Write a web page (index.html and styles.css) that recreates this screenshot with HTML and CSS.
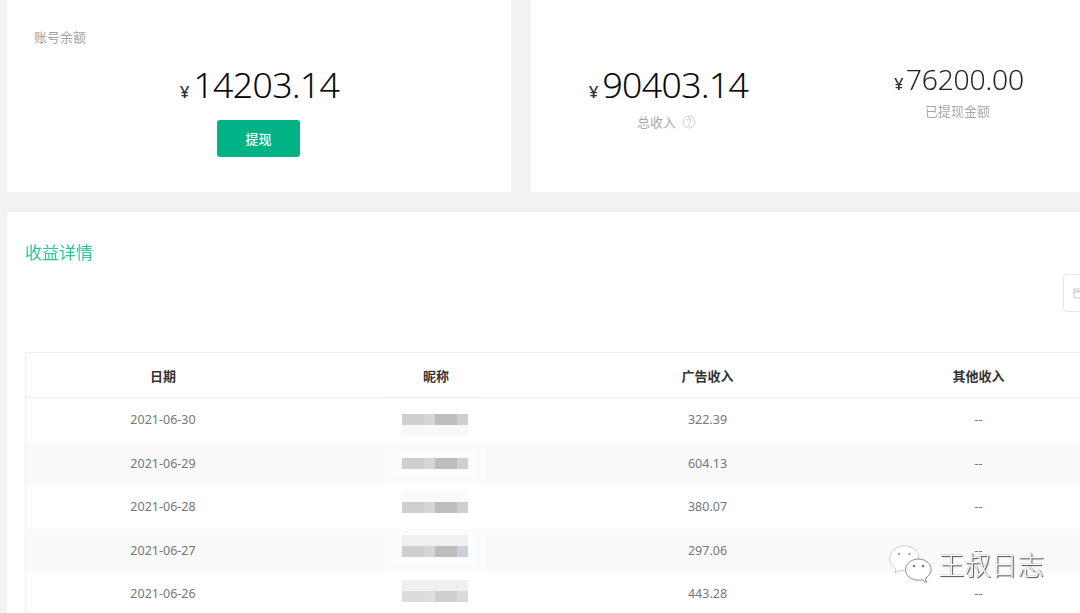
FILE: index.html
```html
<!DOCTYPE html>
<html lang="zh-CN">
<head>
<meta charset="utf-8">
<title>收益详情</title>
<link rel="stylesheet" href="styles.css">
</head>
<body>
<main class="page">
  <section class="top">
    <div class="card balance">
      <div class="balance-title">账号余额</div>
      <div class="amount big"><span class="yen">¥</span>14203.14</div>
      <button class="withdraw">提现</button>
    </div>
    <div class="card income">
      <div class="stat stat-total">
        <div class="amount big"><span class="yen">¥</span>90403.14</div>
        <div class="stat-label">总收入
          <svg class="help" viewBox="0 0 14 14" width="14" height="14"><circle cx="7" cy="7" r="6" fill="none" stroke="#d0d0d0"/><path d="M5.2 5.600a1.900 1.900 0 1 1 2.800 1.600c-.7.400-1 .7-1 1.500" fill="none" stroke="#c4c4c4"/><circle cx="7" cy="10.400" r=".7" fill="#c4c4c4"/></svg>
        </div>
      </div>
      <div class="stat stat-withdrawn">
        <div class="amount mid"><span class="yen">¥</span>76200.00</div>
        <div class="stat-label">已提现金额</div>
      </div>
    </div>
  </section>

  <section class="card details">
    <h2 class="details-title">收益详情</h2>
    <div class="filter-row">
      <div class="date-box">
        <svg class="date-icon" viewBox="0 0 12 12" width="12" height="12"><rect x="1" y="2" width="10" height="9" rx="1" fill="none" stroke="#c9c9d2" stroke-width="1.200"/><path d="M1 5h10M3 4h6" stroke="#c9c9d2" stroke-width="1.200"/></svg>
      </div>
    </div>
    <table class="table">
      <thead>
        <tr><th>日期</th><th>昵称</th><th>广告收入</th><th>其他收入</th></tr>
      </thead>
      <tbody>
        <tr><td>2021-06-30</td><td><div class="mosaic m-under r1"><i></i><i></i><i></i><i></i><i></i><i></i></div></td><td>322.39</td><td>--</td></tr>
        <tr><td>2021-06-29</td><td><div class="mosaic"><i></i><i></i><i></i><i></i><i></i><i></i></div></td><td>604.13</td><td>--</td></tr>
        <tr><td>2021-06-28</td><td><div class="mosaic m-faint r3"><i></i><i></i><i></i><i></i><i></i><i></i></div></td><td>380.07</td><td>--</td></tr>
        <tr><td>2021-06-27</td><td><div class="mosaic m-over r4"><i></i><i></i><i></i><i></i><i></i><i></i></div></td><td>297.06</td><td>--</td></tr>
        <tr><td>2021-06-26</td><td><div class="mosaic m-over m-light r5"><i></i><i></i><i></i><i></i><i></i><i></i></div></td><td>443.28</td><td>--</td></tr>
      </tbody>
    </table>
  </section>
</main>

<div class="watermark">
  <svg class="wm-icon" viewBox="0 0 44 38" width="44" height="38">
    <path d="M15.500 .8C7.500 .8.800 6.400.800 13.500c0 4.200 2.400 7.800 6 10l-1 4.500 5.500-2.800c1.300.3 2.800.5 4.200.5 8 0 14.500-5.600 14.500-12.200S23.500 .8 15.500 .8z" fill="#fff" stroke="#c0c0c0" stroke-width=".8"/>
    <path d="M29.500 14c-7 0-13 4.700-13 10.800s6 10.400 13 10.400c1.200 0 2.300-.1 3.400-.4l4.600 2.600-1-4.200c3.300-1.900 5.600-4.900 5.600-8.400 0-6.100-5.600-10.800-12.600-10.800z" fill="#fff" stroke="#808080" stroke-width=".9"/>
    <circle cx="10" cy="9" r="1.300" fill="#aaa"/><circle cx="20.500" cy="9" r="1.300" fill="#aaa"/>
    <circle cx="25" cy="21" r="1.300" fill="#777"/><circle cx="34" cy="21" r="1.300" fill="#777"/>
  </svg>
  <span class="wm-text">王叔日志</span>
</div>
</body>
</html>
```
FILE: styles.css
```css
* { box-sizing: border-box; }
html, body { margin: 0; height: 613px; overflow: hidden; background: #f2f2f2; }
body { font-family: "Noto Sans", "Noto Sans CJK SC", sans-serif; color: #333; position: relative; }

.page { width: 1080px; padding-left: 6.500px; filter: blur(0.25px); overflow: hidden; }
.top { display: flex; gap: 20px; height: 192px; margin-bottom: 20px; }
.card { background: #fff; }

.balance { flex: 0 0 504px; display: flex; flex-direction: column; align-items: center; padding-top: 29px; }
.balance-title { align-self: flex-start; margin-left: 27.500px; font-size: 13px; line-height: 16px; color: #a3a3a3; }
.balance .amount { margin-top: 17px; }

.amount { font-family: "Open Sans", sans-serif; font-weight: 300; color: #000; line-height: 44px; white-space: nowrap; -webkit-text-stroke: .2px #000; }
.big { font-size: 35.500px; letter-spacing: -.55px; padding-left: 2px; }
.mid { font-size: 28.300px; letter-spacing: -.2px; line-height: 36px; color: #222; -webkit-text-stroke: .15px #222; padding-left: 3px; }
.yen { font-family: "Noto Sans", sans-serif; font-weight: 500; font-size: 17px; margin-right: 4px; color: #333; letter-spacing: 0; -webkit-text-stroke: 0; }
.mid .yen { margin-right: 2px; }

.withdraw { margin-top: 6px; width: 83px; height: 37px; border: 0; border-radius: 3px; background: #00b386; color: #fff; font: 500 13px "Noto Sans CJK SC", sans-serif; padding: 0; }

.income { flex: 0 0 600px; display: grid; grid-template-columns: 274px 306px; }
.stat { display: flex; flex-direction: column; align-items: center; }
.stat-total { padding-top: 62px; }
.stat-withdrawn { padding-top: 61px; }
.stat-label { display: flex; align-items: center; gap: 6px; font-size: 13px; line-height: 18px; color: #a8a8a8; }
.stat-total .stat-label { margin-top: -1px; margin-left: -2px; }
.stat-withdrawn .stat-label { margin-top: 0; margin-left: 0; }

.details { height: 420px; padding: 29px 0 0 18.500px; }
.details-title { margin: 0; font-weight: 400; font-size: 17px; line-height: 24px; color: #2cc796; }
.filter-row { height: 87px; padding: 9px 0 0 1038px; }
.date-box { width: 120px; height: 38px; border: 1px solid #e6e6e6; border-radius: 4px; padding: 12px 0 0 9px; }
.date-icon { display: block; }

.table { border-collapse: separate; border-spacing: 0; table-layout: fixed; width: 1088px; border: solid #f0f0f0; border-width: 1px 0 0 1px; font-size: 12.500px; }
.table th, .table td { text-align: center; padding: 0; }
.table th:nth-child(1) { width: 274px; }
.table th:nth-child(2) { width: 272px; }
.table th:nth-child(3), .table th:nth-child(4) { width: 271px; }
.table th { height: 45px; font: 700 13px "Noto Sans CJK SC", sans-serif; color: #333; border-bottom: 1px solid #eee; }
.table td { height: 43.500px; color: #777; }
.table td:nth-child(2) { padding-right: 2px; }
.table tbody tr:nth-child(even) td { background: #fafafa; }

.mosaic { display: grid; grid-template-columns: repeat(6, 11px); width: 66px; margin: 0 auto; box-shadow: 0 0 0 8px rgba(255,255,255,.35), 0 0 0 18px rgba(255,255,255,.2); background: rgba(255,255,255,.4); }
.mosaic i { display: block; height: 11px; background: #cfcfcf; }
.mosaic i:nth-child(3) { background: #d6d6d6; }
.mosaic i:nth-child(4), .mosaic i:nth-child(5) { background: #bdbdbd; }
.mosaic i:nth-child(6) { background: #ccd0d4; }
.m-under { border-bottom: 11px solid #f8f8f8; }
.m-over { border-top: 11px solid #f0f0f0; }
.m-faint { border-top: 11px solid #fafafa; }
.m-light i { background: #dcdcdc; }
.m-light i:nth-child(3) { background: #dedede; }
.m-light i:nth-child(4), .m-light i:nth-child(5) { background: #cdcfcf; }
.m-light i:nth-child(6) { background: #d8dade; }
.r1 { margin-top: 10px; }
.r3 { margin-bottom: 9px; }
.r4 { margin-bottom: 8px; }
.r5 { margin-bottom: 5px; }

.watermark { position: absolute; left: 889px; top: 545px; display: flex; align-items: center; gap: 5px; }
.wm-icon { display: block; }
.wm-text { font: 300 26.500px/38px "Noto Sans CJK SC", sans-serif; color: #fff; text-shadow: 1px 1px 1px #444, 0 0 1px #777; white-space: nowrap; }
```
